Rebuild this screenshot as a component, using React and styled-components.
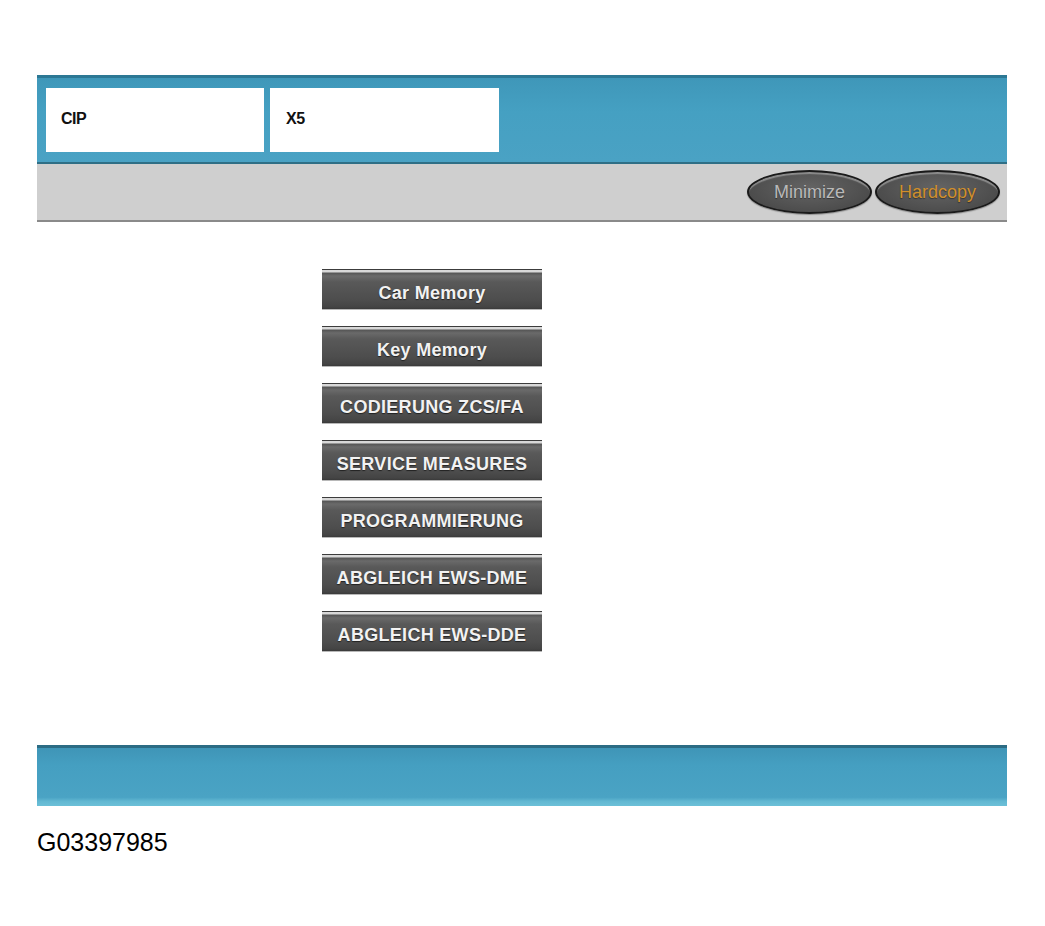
import React from "react";
import styled, { createGlobalStyle } from "styled-components";

const Global = createGlobalStyle`
  html, body { margin: 0; padding: 0; background: #ffffff; }
  body { font-family: "Liberation Sans", Arial, sans-serif; }
`;

const Page = styled.div`
  width: 1045px;
  height: 926px;
  padding: 75px 38px 0 37px;
  box-sizing: border-box;
  display: flex;
  flex-direction: column;
`;

const Screen = styled.div`
  width: 970px;
  display: flex;
  flex-direction: column;
`;

const TopBar = styled.div`
  height: 89px;
  box-sizing: border-box;
  background: linear-gradient(#3f97b9, #45a0c2 40%, #4aa2c4);
  border-top: 3px solid #2c7894;
  border-bottom: 2px solid #2f6f86;
  display: flex;
  align-items: flex-start;
  padding: 10px 0 0 9px;
  gap: 6px;
`;

const InfoBox = styled.div`
  width: ${(p) => p.$w}px;
  height: 64px;
  background: #ffffff;
  box-sizing: border-box;
  display: flex;
  align-items: center;
  padding-left: ${(p) => p.$pad}px;
  padding-bottom: 2px;
  font-weight: bold;
  font-size: 16px;
  color: #111;
  letter-spacing: -0.5px;
`;

const ToolBar = styled.div`
  height: 58px;
  box-sizing: border-box;
  background: #cfcfcf;
  border-bottom: 2px solid #8a8a8a;
  display: flex;
  justify-content: flex-end;
  align-items: center;
  padding: 0 7px 0 0;
  gap: 3px;
`;

const PillButton = styled.div`
  width: 125px;
  height: 44px;
  box-sizing: border-box;
  border-radius: 50%;
  background: radial-gradient(ellipse at 50% 40%, #646464 0%, #525252 55%, #424242 100%);
  border: 2px solid #1a1a1a;
  box-shadow: inset 0 3px 1px -1px rgba(210, 210, 210, 0.45), 0 1px 1px rgba(0,0,0,0.3);
  display: flex;
  align-items: center;
  justify-content: center;
  font-size: 18px;
  color: ${(p) => p.$color};
  text-shadow: 0 1px 1px rgba(0,0,0,0.4);
`;

const Content = styled.div`
  height: 523px;
  display: flex;
  flex-direction: column;
  gap: 17px;
  padding: 47px 0 0 285px;
  box-sizing: border-box;
`;

const MenuButton = styled.div`
  width: 220px;
  height: 40px;
  box-sizing: border-box;
  border-top: 1px solid #3c3c3c;
  background: linear-gradient(
    #d8d8d8 0px, #d8d8d8 2px,
    #555 3px, #6a6a6a 6px, #595959 12px,
    #4d4d4d 30px, #444 37px, #3a3a3a 39px
  );
  box-shadow: 0 1px 0 #b8b8b8;
  display: flex;
  align-items: center;
  justify-content: center;
  padding-top: 8px;
  color: #f2f2f2;
  font-weight: bold;
  font-size: 18px;
  letter-spacing: 0.3px;
  text-shadow: 0 1px 1px #222;
`;

const BottomBar = styled.div`
  height: 61px;
  box-sizing: border-box;
  background: linear-gradient(#3f95b7, #459fc1 30%, #4aa3c4 85%, #62b8d2 92%, #6cc0d8);
  border-top: 3px solid #2c6c84;
`;

const Caption = styled.div`
  margin-top: 22px;
  font-size: 25px;
  color: #000;
  font-family: "Liberation Sans", Arial, sans-serif;
`;

const items = [
  "Car Memory",
  "Key Memory",
  "CODIERUNG ZCS/FA",
  "SERVICE MEASURES",
  "PROGRAMMIERUNG",
  "ABGLEICH EWS-DME",
  "ABGLEICH EWS-DDE",
];

export default function App() {
  return (
    <>
      <Global />
      <Page>
        <Screen>
          <TopBar>
            <InfoBox $w={218} $pad={15}>CIP</InfoBox>
            <InfoBox $w={229} $pad={16}>X5</InfoBox>
          </TopBar>
          <ToolBar>
            <PillButton $color="#b9b9b9">Minimize</PillButton>
            <PillButton $color="#d08f2c">Hardcopy</PillButton>
          </ToolBar>
          <Content>
            {items.map((t) => (
              <MenuButton key={t}>{t}</MenuButton>
            ))}
          </Content>
          <BottomBar />
        </Screen>
        <Caption>G03397985</Caption>
      </Page>
    </>
  );
}
